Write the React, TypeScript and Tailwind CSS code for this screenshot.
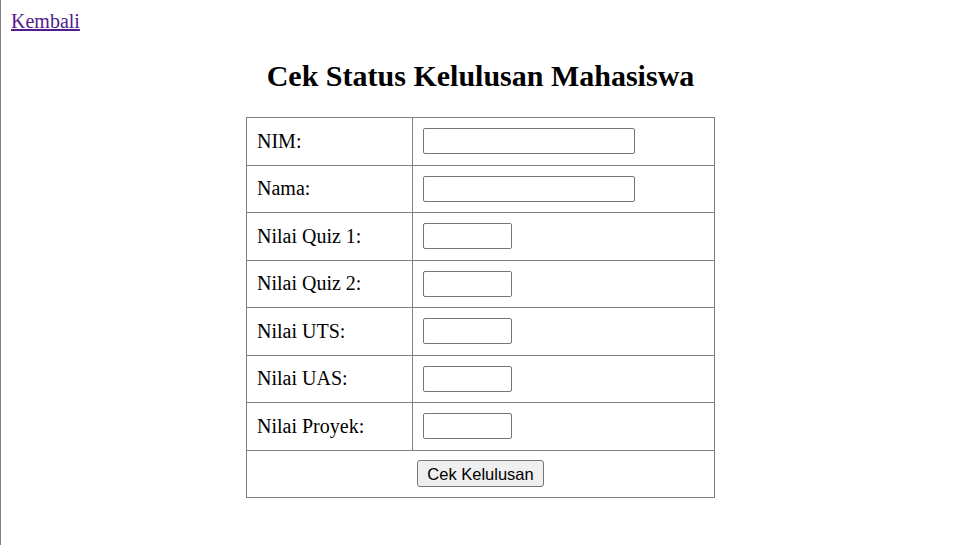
export default function App() {
  const rows: { label: string; wide: boolean }[] = [
    { label: 'NIM:', wide: true },
    { label: 'Nama:', wide: true },
    { label: 'Nilai Quiz 1:', wide: false },
    { label: 'Nilai Quiz 2:', wide: false },
    { label: 'Nilai UTS:', wide: false },
    { label: 'Nilai UAS:', wide: false },
    { label: 'Nilai Proyek:', wide: false },
  ]

  return (
    <div className="min-h-screen bg-white border-l border-[#808080] font-['Liberation_Serif',serif] text-[20px] leading-[23px] text-black">
      <div className="p-[10px]">
        <a href="#" className="text-[#551a8b] underline">Kembali</a>

        <div className="pl-[4px]">
          <h2 className="text-center text-[30px] leading-[35px] font-bold mt-[25px] mb-[24px]">
            Cek Status Kelulusan Mahasiswa
          </h2>

          <table className="mx-auto w-[469px] border-collapse border border-[#808080]">
            <tbody>
              {rows.map((r) => (
                <tr key={r.label} className="h-[47.5px]">
                  <td className="w-[166px] border border-[#808080] px-[10px] py-0 align-middle">{r.label}</td>
                  <td className="border border-[#808080] px-[10px] py-0 align-middle">
                    <input
                      type="text"
                      className={`${r.wide ? 'w-[212px]' : 'w-[89px]'} h-[26px] block border border-[#767676] rounded-[2px] bg-white`}
                    />
                  </td>
                </tr>
              ))}
              <tr className="h-[47.5px]">
                <td colSpan={2} className="border border-[#808080] text-center align-middle">
                  <button
                    type="button"
                    className="inline-block h-[27px] px-[9px] bg-[#efefef] border border-[#767676] rounded-[3px] font-['Liberation_Sans',Arial,sans-serif] text-[16.5px] leading-[20px] text-black"
                  >
                    Cek Kelulusan
                  </button>
                </td>
              </tr>
            </tbody>
          </table>
        </div>
      </div>
    </div>
  )
}
